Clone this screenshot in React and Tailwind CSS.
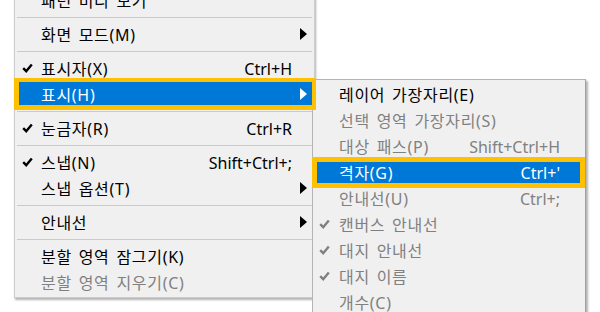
import React from 'react';

const Check = ({ color }) => (
    <svg width="11" height="10" viewBox="0 0 11 10" className="block">
        <path d="M1.2 5.2 L4.2 8.2 L9.8 1.4" fill="none" stroke={color} strokeWidth="2.4" />
    </svg>
);

const Arrow = ({ color }) => (
    <svg width="7" height="12" viewBox="0 0 7 12" className="block">
        <path d="M0 0 L7 6 L0 12 Z" fill={color} />
    </svg>
);

const mainItems = [
    { label: '패턴 미리 보기' },
    { sep: true },
    { label: '화면 모드(M)', sub: true },
    { sep: true },
    { label: '표시자(X)', checked: true, shortcut: 'Ctrl+H' },
    { label: '표시(H)', sub: true, active: true },
    { sep: true },
    { label: '눈금자(R)', checked: true, shortcut: 'Ctrl+R' },
    { sep: true },
    { label: '스냅(N)', checked: true, shortcut: 'Shift+Ctrl+;' },
    { label: '스냅 옵션(T)', sub: true },
    { sep: true },
    { label: '안내선', sub: true },
    { sep: true },
    { label: '분할 영역 잠그기(K)' },
    { label: '분할 영역 지우기(C)', disabled: true },
];

const subItems = [
    { label: '레이어 가장자리(E)' },
    { label: '선택 영역 가장자리(S)', disabled: true },
    { label: '대상 패스(P)', disabled: true, shortcut: 'Shift+Ctrl+H' },
    { label: '격자(G)', active: true, shortcut: "Ctrl+'" },
    { label: '안내선(U)', disabled: true, shortcut: 'Ctrl+;' },
    { label: '캔버스 안내선', disabled: true, checked: true },
    { label: '대지 안내선', disabled: true, checked: true },
    { label: '대지 이름', disabled: true, checked: true },
    { label: '개수(C)', disabled: true },
];

const Separator = () => (
    <div className="h-[8px] flex items-center px-[2px]">
        <div className="h-px w-full bg-[#cacaca]"></div>
    </div>
);

const labelCls = 'flex-1 whitespace-nowrap pt-[2px] tracking-[0.7px] [word-spacing:2px]';

const MainRow = ({ item }) => {
    const text = item.active ? 'text-white' : item.disabled ? 'text-[#808080]' : 'text-black';
    return (
        <div className={`relative h-[26px] flex items-center ${item.active ? 'bg-[#0078d7]' : ''} ${text}`}>
            <div className="w-[26px] pl-[7px] flex items-center">
                {item.checked && <Check color="#000" />}
            </div>
            <span className={labelCls}>{item.label}</span>
            {item.shortcut && <span className="whitespace-nowrap pt-[2px]">{item.shortcut}</span>}
            <div className="w-[22px] flex justify-end pr-[7px]">
                {item.sub && <Arrow color={item.active ? '#fff' : '#000'} />}
            </div>
            {item.active && (
                <div className="absolute z-20 -left-[1px] -right-[2px] -top-[3px] -bottom-[3px] border-t-4 border-r-4 border-b-[5px] border-l-[5px] border-[#ffc000]"></div>
            )}
        </div>
    );
};

const SubRow = ({ item }) => {
    const text = item.active ? 'text-white' : item.disabled ? 'text-[#808080]' : 'text-black';
    return (
        <div className={`relative h-[26px] flex items-center ${item.active ? 'bg-[#0078d7]' : ''} ${text}`}>
            <div className="w-[26px] pl-[6px] flex items-center">
                {item.checked && <Check color={item.disabled ? '#808080' : '#000'} />}
            </div>
            <span className={labelCls}>{item.label}</span>
            {item.shortcut && <span className="whitespace-nowrap pt-[2px]">{item.shortcut}</span>}
            <div className="w-[25px]"></div>
            {item.active && (
                <div className="absolute z-20 -left-[1px] right-0 -top-[2px] -bottom-[3px] border-[5px] border-[#ffc000]"></div>
            )}
        </div>
    );
};

export default function App() {
    return (
        <div
            className="relative w-[600px] h-[312px] overflow-hidden bg-white text-[16px] leading-none"
            style={{ fontFamily: '"Noto Sans", "Noto Sans CJK KR", sans-serif' }}
        >
            {/* main menu */}
            <div className="ml-[14px] -mt-[13px] w-[301px] bg-[#f0f0f0] border-x border-b border-[#cccccc] pb-[2px] shadow-[1px_2px_2px_rgba(0,0,0,0.3)]">
                {mainItems.map((item, i) =>
                    item.sep ? <Separator key={i} /> : <MainRow key={i} item={item} />
                )}
            </div>

            {/* submenu */}
            <div className="absolute z-10 left-[312px] top-[79px] w-[274px] bg-[#f0f0f0] border border-[#b4b4b4] border-r-[#a0a0a0] pt-[1px] shadow-[2px_2px_2px_rgba(0,0,0,0.3)]">
                {subItems.map((item, i) => (
                    <SubRow key={i} item={item} />
                ))}
            </div>
        </div>
    );
}
